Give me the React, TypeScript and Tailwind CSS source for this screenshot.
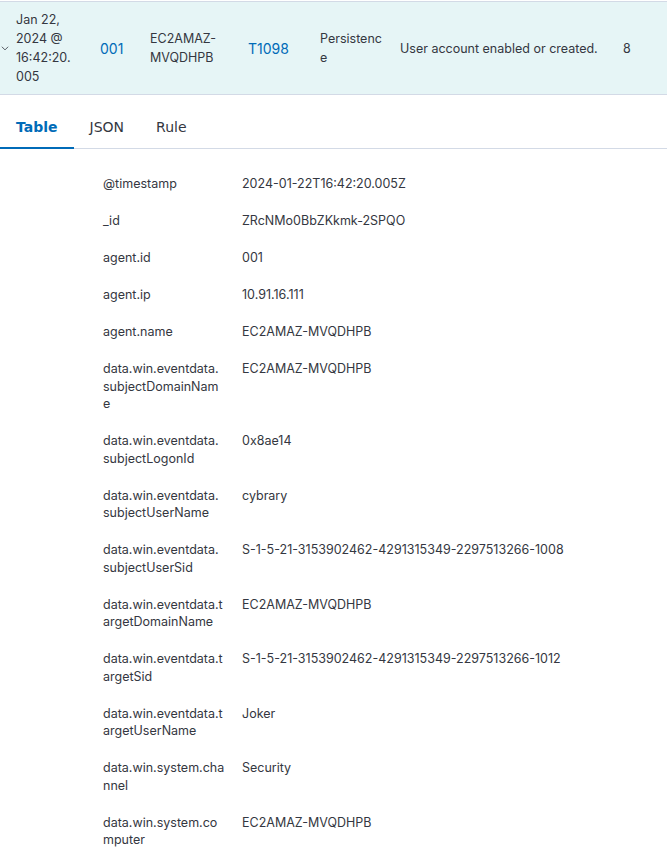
import React from "react";

const rows: [string, string][] = [
  ["@timestamp", "2024-01-22T16:42:20.005Z"],
  ["_id", "ZRcNMo0BbZKkmk-2SPQO"],
  ["agent.id", "001"],
  ["agent.ip", "10.91.16.111"],
  ["agent.name", "EC2AMAZ-MVQDHPB"],
  ["data.win.eventdata.subjectDomainName", "EC2AMAZ-MVQDHPB"],
  ["data.win.eventdata.subjectLogonId", "0x8ae14"],
  ["data.win.eventdata.subjectUserName", "cybrary"],
  ["data.win.eventdata.subjectUserSid", "S-1-5-21-3153902462-4291315349-2297513266-1008"],
  ["data.win.eventdata.targetDomainName", "EC2AMAZ-MVQDHPB"],
  ["data.win.eventdata.targetSid", "S-1-5-21-3153902462-4291315349-2297513266-1012"],
  ["data.win.eventdata.targetUserName", "Joker"],
  ["data.win.system.channel", "Security"],
  ["data.win.system.computer", "EC2AMAZ-MVQDHPB"],
];

export default function App() {
  return (
    <div className="w-[667px] h-[850px] overflow-hidden bg-white text-[#343741] font-['Inter',sans-serif]">
      <div className="pt-px">
        <div className="flex items-center h-[94px] bg-[#e6f5f6] border-y border-[#d3dae6] text-[12.5px] leading-[19px]">
          <div className="w-4 flex items-center">
            <svg width="10" height="10" viewBox="0 0 16 16" fill="none" stroke="#343741" strokeWidth="1.3">
              <path d="M3 6l5 5 5-5" />
            </svg>
          </div>
          <div className="w-[84px]">
            <div className="w-[60px] break-words">Jan 22, 2024 @ 16:42:20.005</div>
          </div>
          <div className="w-[50px] text-[14px] text-[#006bb8]">001</div>
          <div className="w-[98px]">
            <div className="w-[80px] break-words">EC2AMAZ-MVQDHPB</div>
          </div>
          <div className="w-[72px] text-[14px] text-[#006bb8]">T1098</div>
          <div className="w-[80px]">
            <div className="w-[64px] break-all">Persistence</div>
          </div>
          <div className="w-[223px]">User account enabled or created.</div>
          <div>8</div>
        </div>
      </div>
      <div className="flex border-b border-[#d3dae6] h-[54px] font-['DejaVu_Sans',sans-serif] text-[14px]">
        <div className="px-4 pt-3 flex items-center font-bold text-[#006bb8] border-b-2 border-[#006bb8] -mb-px">Table</div>
        <div className="px-4 pt-3 flex items-center">JSON</div>
        <div className="px-4 pt-3 flex items-center">Rule</div>
      </div>
      <div className="mt-[16.5px] pl-[103px] text-[12.5px] leading-[17.5px]">
        {rows.map(([k, v]) => (
          <div key={k} className="flex py-[9.75px]">
            <div className="w-[139px] pr-[17px] break-all">{k}</div>
            <div className="flex-1">{v}</div>
          </div>
        ))}
      </div>
    </div>
  );
}
